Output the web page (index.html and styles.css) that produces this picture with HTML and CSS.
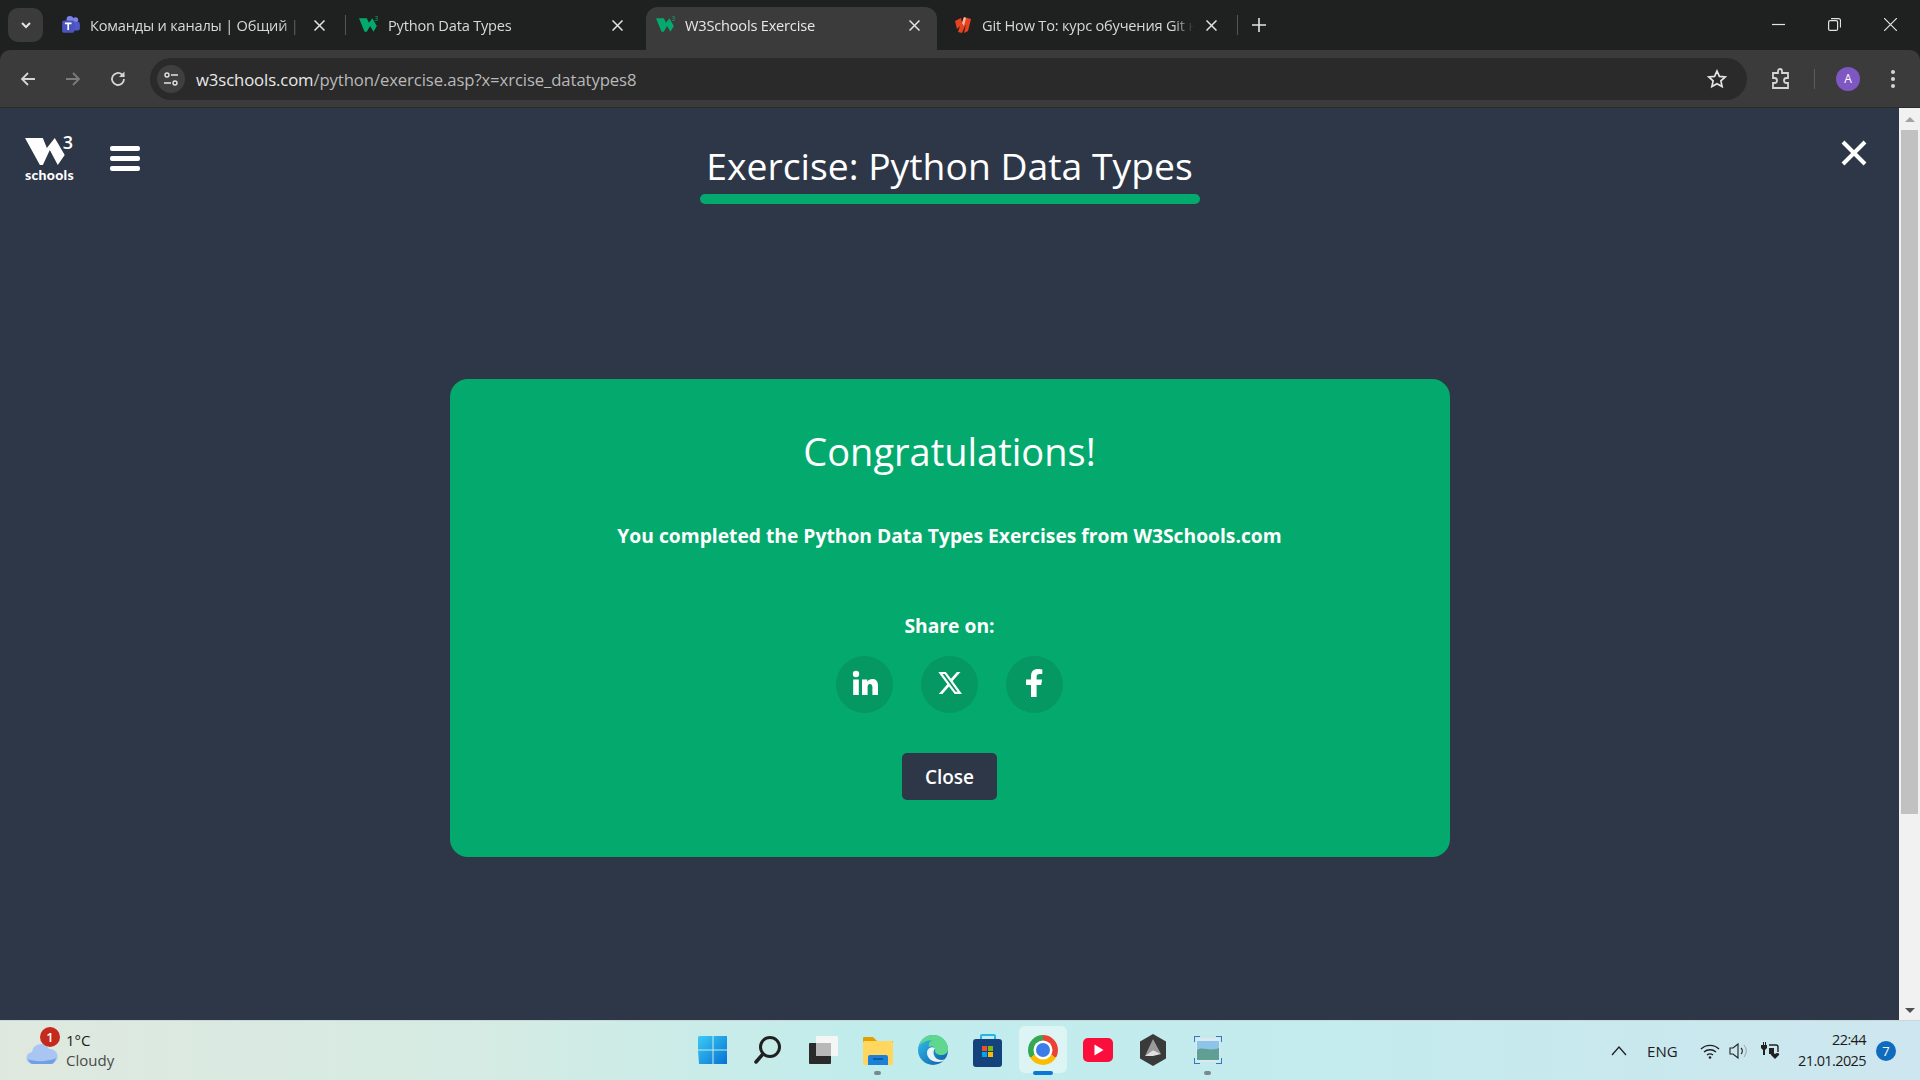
FILE: index.html
```html
<!DOCTYPE html>
<html lang="en">
<head>
    <meta charset="UTF-8">
    <meta name="viewport" content="width=device-width, initial-scale=1.0">
    <title>W3Schools Exercise</title>
    <link rel="stylesheet" href="styles.css">
</head>
<body>
    <!-- browser tabs -->
    <div class="tabstrip">
        <div class="tab-menu">
            <svg width="12" height="12" viewBox="0 0 12 12"><path d="M2 4l4 4 4-4" fill="none" stroke="#e3e3e3" stroke-width="2"/></svg>
        </div>
        <div class="tab">
            <svg class="favicon" viewBox="0 0 18 18"><circle cx="13" cy="4.5" r="2.5" fill="#7b83eb"/><rect x="9" y="6" width="8" height="8" rx="2" fill="#5059c9"/><circle cx="8" cy="4" r="3" fill="#7b83eb"/><rect x="1" y="5" width="11" height="11" rx="1.5" fill="#4b53bc"/><path d="M3.5 7.5h6M6.5 7.5v6" stroke="#fff" stroke-width="1.5"/></svg>
            <span class="tab-title">Команды и каналы | Общий | Microsoft Teams</span>
            <svg class="tab-close" viewBox="0 0 11 11"><path d="M0.5 0.5l10 10M10.5 0.5l-10 10" stroke="#e3e3e3" stroke-width="1.5"/></svg>
        </div>
        <div class="tab-sep"></div>
        <div class="tab">
            <svg class="favicon" viewBox="0 0 18 18"><path d="M0 3h7l2 4 3-4 4 7-3 5-3-5-3 5h-2z" fill="#04aa6d"/><text x="14" y="5" font-size="6" fill="#04aa6d">3</text></svg>
            <span class="tab-title">Python Data Types</span>
            <svg class="tab-close" viewBox="0 0 11 11"><path d="M0.5 0.5l10 10M10.5 0.5l-10 10" stroke="#e3e3e3" stroke-width="1.5"/></svg>
        </div>
        <div class="tab active">
            <svg class="favicon" viewBox="0 0 18 18"><path d="M0 3h7l2 4 3-4 4 7-3 5-3-5-3 5h-2z" fill="#04aa6d"/><text x="14" y="5" font-size="6" fill="#04aa6d">3</text></svg>
            <span class="tab-title">W3Schools Exercise</span>
            <svg class="tab-close" viewBox="0 0 11 11"><path d="M0.5 0.5l10 10M10.5 0.5l-10 10" stroke="#e3e3e3" stroke-width="1.5"/></svg>
        </div>
        <div class="tab">
            <svg class="favicon" viewBox="0 0 20 20"><path d="M2 6l6-3 1 5 2-6 7 2-3 12-4 2 2-9-4 9-4-1 2-6-3 3z" fill="#e8431f"/><path d="M9 8l2-6 2 1-2 8z" fill="#f9b9a4"/></svg>
            <span class="tab-title">Git How To: курс обучения Git на русском</span>
            <svg class="tab-close" viewBox="0 0 11 11"><path d="M0.5 0.5l10 10M10.5 0.5l-10 10" stroke="#e3e3e3" stroke-width="1.5"/></svg>
        </div>
        <div class="tab-sep"></div>
        <div class="tab-new">
            <svg width="14" height="14" viewBox="0 0 14 14"><path d="M7 0v14M0 7h14" stroke="#e3e3e3" stroke-width="1.6"/></svg>
        </div>
        <div class="window-btns">
            <svg width="13" height="13" viewBox="0 0 13 13"><path d="M0 6.5h13" stroke="#e3e3e3" stroke-width="1.2"/></svg>
            <svg width="13" height="13" viewBox="0 0 13 13"><rect x="0.6" y="2.6" width="9" height="9.8" rx="1.5" fill="none" stroke="#e3e3e3" stroke-width="1.2"/><path d="M3 .6h7.5a2 2 0 0 1 2 2v7" fill="none" stroke="#e3e3e3" stroke-width="1.2"/></svg>
            <svg width="13" height="13" viewBox="0 0 13 13"><path d="M0 0l13 13M13 0L0 13" stroke="#e3e3e3" stroke-width="1.2"/></svg>
        </div>
    </div>

    <!-- address bar -->
    <div class="toolbar">
        <div class="nav-btn">
            <svg width="18" height="18" viewBox="0 0 18 18"><path d="M16 9H3M9 3L3 9l6 6" fill="none" stroke="#d5d5d5" stroke-width="1.8"/></svg>
        </div>
        <div class="nav-btn">
            <svg width="18" height="18" viewBox="0 0 18 18"><path d="M2 9h13M9 3l6 6-6 6" fill="none" stroke="#7b7b7b" stroke-width="1.8"/></svg>
        </div>
        <div class="nav-btn">
            <svg width="18" height="18" viewBox="0 0 18 18"><path d="M15 9a6 6 0 1 1-2-4.5L15 6.500" fill="none" stroke="#d5d5d5" stroke-width="1.8"/><path d="M15.500 1.500v5.500h-5.500z" fill="#d5d5d5"/></svg>
        </div>
        <div class="omnibox">
            <div class="site-chip">
                <svg width="16" height="16" viewBox="0 0 16 16"><circle cx="4" cy="4" r="2" fill="none" stroke="#e3e3e3" stroke-width="1.4"/><path d="M8 4h7M1 12h7" stroke="#e3e3e3" stroke-width="1.4"/><circle cx="12" cy="12" r="2" fill="none" stroke="#e3e3e3" stroke-width="1.4"/></svg>
            </div>
            <div class="url"><span class="url-host">w3schools.com</span>/python/exercise.asp?x=xrcise_datatypes8</div>
            <svg class="star" width="20" height="20" viewBox="0 0 20 20"><path d="M10 2l2.400 5.400 5.800.6-4.300 3.900 1.200 5.700-5.100-2.900-5.100 2.900 1.200-5.700L1.800 8l5.800-.6z" fill="none" stroke="#e3e3e3" stroke-width="1.700"/></svg>
        </div>
        <div class="toolbar-right">
            <svg width="20" height="22" viewBox="0 0 20 22"><path d="M2 5h5V3a2 2 0 0 1 4 0v2h6v5h-1.500a2.500 2.500 0 0 0 0 5H17v5H2v-5h1.500a2.500 2.500 0 0 0 0-5H2z" fill="none" stroke="#d5d5d5" stroke-width="1.800"/></svg>
            <div class="toolbar-sep"></div>
            <div class="avatar">A</div>
            <div class="menu-dots"><i></i><i></i><i></i></div>
        </div>
    </div>

    <!-- page -->
    <div class="viewport">
        <div class="page">
            <div class="page-head">
                <div class="head-left">
                    <div class="logo">
                        <div class="logo-top">
                            <svg width="40" height="27" viewBox="0 0 40 27"><path d="M0 0h18l4 10 8-10 10 17-7 10-8-15-7 15h-3z" fill="#fff"/></svg>
                            <span class="logo-three">3</span>
                        </div>
                        <span class="logo-word">schools</span>
                    </div>
                    <div class="burger"><i></i><i></i><i></i></div>
                </div>
                <div class="head-title">
                    <h1>Exercise: Python Data Types</h1>
                    <div class="title-bar"></div>
                </div>
                <div class="head-right">
                    <svg width="26" height="26" viewBox="0 0 26 26"><path d="M2 2l22 22M24 2L2 24" stroke="#fff" stroke-width="4"/></svg>
                </div>
            </div>

            <div class="result-card">
                <h2>Congratulations!</h2>
                <p class="result-text">You completed the Python Data Types Exercises from W3Schools.com</p>
                <p class="share-label">Share on:</p>
                <div class="share-row">
                    <div class="share-btn">
                        <svg width="26" height="26" viewBox="0 0 26 26"><circle cx="4" cy="4" r="3.200" fill="#fff"/><path d="M1.200 9.500h5.600V25H1.200zM10 9.500h5.300v2.200c1-1.600 2.800-2.600 5-2.600 4.200 0 5.700 2.700 5.700 7V25h-5.600v-7.800c0-2-.6-3.300-2.400-3.300-1.900 0-2.400 1.500-2.400 3.300V25H10z" fill="#fff"/></svg>
                    </div>
                    <div class="share-btn">
                        <svg width="24" height="24" viewBox="0 0 24 24"><path d="M18.900 1h3.600l-7.900 9.100L24 23h-7.300l-5.700-7.500L4.400 23H.8l8.500-9.700L.3 1h7.500l5.200 6.800zM17.600 20.800h2L6.700 3.100H4.500z" fill="#fff"/></svg>
                    </div>
                    <div class="share-btn">
                        <svg width="18" height="28" viewBox="0 0 18 28"><path d="M5 28V16H0v-5.500h5V7c0-4.500 2.700-7 6.800-7 1.900 0 3.700.3 4.500.4v4.700h-2.800c-2.200 0-2.900 1.400-2.900 2.800v2.600h5.500L15.200 16h-4.600v12z" fill="#fff"/></svg>
                    </div>
                </div>
                <button class="close-btn">Close</button>
            </div>
        </div>
        <div class="scrollbar">
            <div class="scroll-up"></div>
            <div class="scroll-thumb"></div>
            <div class="scroll-down"></div>
        </div>
    </div>

    <!-- windows taskbar -->
    <div class="taskbar">
        <div class="weather">
            <div class="weather-icon">
                <svg width="32" height="22" viewBox="0 0 32 22"><path d="M7 21a6 6 0 0 1-1-12 9 9 0 0 1 17-3 7 7 0 0 1 2 15z" fill="#a9c6f2"/><path d="M2 16c6 3 20 3 28-1-1 4-3 6-5 6H7c-2 0-4-2-5-5z" fill="#6f9fe6"/></svg>
                <span class="weather-badge">1</span>
            </div>
            <div class="weather-text">
                <div>1°C</div>
                <div class="weather-sub">Cloudy</div>
            </div>
        </div>

        <div class="task-icons">
            <div class="task-icon">
                <svg width="30" height="30" viewBox="0 0 30 30"><defs><linearGradient id="win" x1="0" y1="0" x2="1" y2="1"><stop offset="0" stop-color="#3ccbf4"/><stop offset="1" stop-color="#0672d4"/></linearGradient></defs><path d="M1 1h13.500v13.500H0V2zM15.500 1H29v13.500H15.500zM0 15.500h14.500V29H1zM15.500 15.500H29V29H15.500z" fill="url(#win)"/></svg>
            </div>
            <div class="task-icon">
                <svg width="30" height="30" viewBox="0 0 30 30"><circle cx="17" cy="12" r="9.500" fill="none" stroke="#202020" stroke-width="3"/><path d="M10 19l-7 8" stroke="#202020" stroke-width="3.500" stroke-linecap="round"/></svg>
            </div>
            <div class="task-icon">
                <svg width="30" height="30" viewBox="0 0 30 30"><rect x="1" y="8" width="22" height="21" rx="1" fill="#2a2a2a"/><rect x="8" y="1" width="22" height="20" rx="1" fill="#f4f6f6"/><rect x="8" y="8" width="15" height="13" fill="#b8b8b8"/></svg>
            </div>
            <div class="task-icon">
                <svg width="30" height="30" viewBox="0 0 30 30"><path d="M0 3a1 1 0 0 1 1-1h9l4 4h16v6H0z" fill="#e0a100"/><rect y="6" width="30" height="24" rx="1.500" fill="#ffd75e"/><path d="M5 22a2 2 0 0 1 2-2h16a2 2 0 0 1 2 2v8H5z" fill="#1b81d8"/><path d="M10 24h10" stroke="#0b4f94" stroke-width="1.500"/></svg>
                <span class="task-dot"></span>
            </div>
            <div class="task-icon">
                <svg width="30" height="30" viewBox="0 0 30 30"><defs><linearGradient id="edge" x1="0" y1="0" x2="1" y2="1"><stop offset="0" stop-color="#35c1f1"/><stop offset="1" stop-color="#0c59a4"/></linearGradient></defs><circle cx="15" cy="15" r="15" fill="url(#edge)"/><path d="M15 0c8 0 15 6 15 14 0 4-3 6-7 6-3 0-6-2-6-4 1-4-3-6-6-4C10 8 13 5 15 5 9 5 3 8 1 11 3 4 9 0 15 0z" fill="#5fd78c"/><path d="M17 13c-3-2-8 0-8 5 0 5 5 9 11 9 3 0 6-1 7-3-3 2-8 1-10-2-2-3-2-6 0-9z" fill="#fff" opacity="0.9"/></svg>
            </div>
            <div class="task-icon">
                <svg width="30" height="34" viewBox="0 0 30 34"><path d="M8 7V3a1 1 0 0 1 1-1h12a1 1 0 0 1 1 1v4" fill="none" stroke="#27b4e8" stroke-width="2"/><rect y="6" width="29" height="28" rx="3" fill="#14427c"/><rect x="9" y="13" width="5" height="5" fill="#f25022"/><rect x="15" y="13" width="5" height="5" fill="#7fba00"/><rect x="9" y="19" width="5" height="5" fill="#00a4ef"/><rect x="15" y="19" width="5" height="5" fill="#ffb900"/></svg>
            </div>
            <div class="task-icon current">
                <div class="chrome-logo"><div class="chrome-eye"></div></div>
                <span class="task-dot wide"></span>
            </div>
            <div class="task-icon">
                <svg width="30" height="24" viewBox="0 0 30 24"><rect width="30" height="24" rx="5" fill="#fa0f3c"/><path d="M11.500 6.500l9 5.500-9 5.500z" fill="#fff"/></svg>
            </div>
            <div class="task-icon">
                <svg width="28" height="32" viewBox="0 0 28 32"><path d="M14 0l13 7.500v17L14 32 1 24.500v-17z" fill="#3a3a3a"/><path d="M14 5l8 15-8-4-8 6z" fill="#9a9a9a"/><path d="M6 22l8-6 8 4-8 2z" fill="#e0e0e0"/></svg>
            </div>
            <div class="task-icon">
                <svg width="28" height="28" viewBox="0 0 28 28"><rect x="2" y="2" width="24" height="24" fill="#dfe8ee"/><rect x="3" y="5" width="22" height="9" fill="#8cc4ea"/><path d="M3 14c6-4 12 2 22-2v12H3z" fill="#5f9f94"/><path d="M0 6V0h6M22 0h6v6M28 22v6h-6M6 28H0v-6" fill="none" stroke="#2e7cc0" stroke-width="2"/></svg>
                <span class="task-dot"></span>
            </div>
        </div>

        <div class="tray">
            <svg class="tray-up" width="16" height="10" viewBox="0 0 16 10"><path d="M1 9l7-8 7 8" fill="none" stroke="#202020" stroke-width="1.300"/></svg>
            <span class="tray-lang">ENG</span>
            <svg class="tray-wifi" width="20" height="16" viewBox="0 0 20 16"><path d="M1 6a13 13 0 0 1 18 0M4 9a9 9 0 0 1 12 0M7 12a5 5 0 0 1 6 0" fill="none" stroke="#202020" stroke-width="1.400"/><circle cx="10" cy="14.500" r="1.300" fill="#202020"/></svg>
            <svg class="tray-sound" width="20" height="16" viewBox="0 0 20 16"><path d="M1 5h3l5-4v14l-5-4H1z" fill="none" stroke="#202020" stroke-width="1.100"/><path d="M12 5a4 4 0 0 1 0 6" fill="none" stroke="#202020" stroke-width="1.100"/><path d="M15 2a9 9 0 0 1 0 12" fill="none" stroke="#a0a8ac" stroke-width="1.100"/></svg>
            <svg class="tray-power" width="20" height="18" viewBox="0 0 20 18"><path d="M1 3h2V0h1v3h1V0h1v3h1v3L5 8v5H3V8L1 6z" fill="#202020"/><path d="M9 3h7a2 2 0 0 1 2 2v5" fill="none" stroke="#202020" stroke-width="1.400"/><rect x="9" y="6" width="5" height="6" fill="#202020"/><path d="M15 17l-4-4c-1-2 2-3 4-1 2-2 5-1 4 1z" fill="#202020"/></svg>
            <div class="clock">
                <div>22:44</div>
                <div>21.01.2025</div>
            </div>
            <span class="notif">7</span>
        </div>
    </div>
</body>
</html>
```

FILE: styles.css
```css
* {
    box-sizing: border-box;
}

html, body {
    margin: 0;
    padding: 0;
    height: 100%;
}

body {
    width: 1920px;
    height: 1080px;
    display: flex;
    flex-direction: column;
    overflow: hidden;
    background: #1f2120;
    font-family: "Open Sans", "Noto Sans", sans-serif;
}

/* browser tabs */
.tabstrip {
    height: 50px;
    background: #1f2120;
    display: flex;
    align-items: flex-end;
    color: #d8d8d8;
    font-size: 14.600px;
    flex: none;
}

.tab-menu {
    width: 35px;
    height: 34px;
    margin: 0 5px 8px 8px;
    background: #3b3b3b;
    border-radius: 10px;
    display: flex;
    align-items: center;
    justify-content: center;
}

.tab {
    width: 297px;
    height: 43px;
    padding: 0 20px 7px 13px;
    border-radius: 12px 12px 0 0;
    display: flex;
    align-items: center;
    flex: none;
}

.tab.active {
    width: 291px;
    margin: 0 3px;
    padding: 0 17px 7px 10px;
    background: #3b3b3b;
    color: #e8e8e8;
}

.favicon {
    width: 20px;
    height: 20px;
    margin-right: 9px;
    flex: none;
}

.tab-title {
    flex: 1;
    white-space: nowrap;
    overflow: hidden;
    font-stretch: 90%;
    letter-spacing: -0.2px;
    -webkit-mask-image: linear-gradient(to right, #000 90%, transparent 100%);
    mask-image: linear-gradient(to right, #000 90%, transparent 100%);
}

.tab-close {
    width: 11px;
    height: 11px;
    margin-left: 12px;
    flex: none;
}

.tab-sep {
    width: 1px;
    height: 20px;
    background: #555;
    margin-bottom: 15px;
    flex: none;
}

.tab-new {
    margin: 0 0 18px 14px;
    width: 14px;
    height: 14px;
    display: flex;
}

.window-btns {
    margin-left: auto;
    height: 50px;
    padding: 0 23px 2px 0;
    display: flex;
    align-items: center;
    gap: 43px;
}

/* address bar */
.toolbar {
    height: 58px;
    background: #3b3b3b;
    display: flex;
    align-items: center;
    padding-left: 5px;
    border-bottom: 1px solid #2a2a2a;
    border-radius: 10px 10px 0 0;
    flex: none;
}

.nav-btn {
    width: 45px;
    height: 40px;
    display: flex;
    align-items: center;
    justify-content: center;
}

.omnibox {
    margin-left: 10px;
    width: 1597px;
    height: 42px;
    background: #2a2a2a;
    border-radius: 21px;
    display: flex;
    align-items: center;
    padding: 0 20px 0 7px;
}

.site-chip {
    width: 28px;
    height: 28px;
    border-radius: 50%;
    background: #3f3f3f;
    display: flex;
    align-items: center;
    justify-content: center;
    margin-right: 11px;
}

.url {
    flex: 1;
    color: #b9b9b9;
    font-size: 16.700px;
    font-stretch: 90%;
    letter-spacing: -0.1px;
    padding-top: 1px;
}

.url-host {
    color: #e8e8e8;
}

.toolbar-right {
    flex: 1;
    display: flex;
    align-items: center;
    padding-left: 24px;
}

.toolbar-sep {
    width: 1px;
    height: 20px;
    background: #5c5c5c;
    margin: 0 21px 0 23px;
}

.avatar {
    width: 24px;
    height: 24px;
    border-radius: 50%;
    background: #7e57c2;
    color: #fff;
    font-size: 12px;
    display: flex;
    align-items: center;
    justify-content: center;
}

.menu-dots {
    margin-left: 31px;
    display: flex;
    flex-direction: column;
    gap: 3px;
}

.menu-dots i {
    display: block;
    width: 4px;
    height: 4px;
    border-radius: 50%;
    background: #d5d5d5;
}

/* page */
.viewport {
    flex: 1;
    display: flex;
    min-height: 0;
}

.page {
    flex: 1;
    background: #2d3748;
    color: #fff;
    display: flex;
    flex-direction: column;
    align-items: center;
}

.page-head {
    width: 100%;
    display: grid;
    grid-template-columns: 1fr 500px 1fr;
    padding-top: 26px;
}

.head-left {
    display: flex;
    align-items: flex-start;
    padding-left: 25px;
}

.logo {
    width: 48px;
    display: flex;
    flex-direction: column;
    margin-top: 4px;
}

.logo-top {
    display: flex;
    align-items: flex-start;
}

.logo-three {
    font-size: 18px;
    font-weight: 600;
    line-height: 18px;
    margin: -5px 0 0 -2px;
}

.logo-word {
    font-family: "Lato", sans-serif;
    font-size: 14px;
    font-weight: 900;
    line-height: 15px;
    margin-top: 2px;
    letter-spacing: 0.3px;
}

.burger {
    margin: 12px 0 0 37px;
    width: 30px;
    display: flex;
    flex-direction: column;
    gap: 5px;
}

.burger i {
    display: block;
    height: 5px;
    background: #fff;
    border-radius: 2px;
}

.head-title {
    text-align: center;
}

.head-title h1 {
    margin: 0;
    font-size: 37.300px;
    font-weight: 400;
    line-height: 52px;
    height: 60px;
    padding-top: 6px;
    white-space: nowrap;
}

.title-bar {
    height: 10px;
    background: #04aa6d;
    border-radius: 5px;
}

.head-right {
    display: flex;
    justify-content: flex-end;
    padding: 6px 32px 0 0;
}

.result-card {
    margin-top: 175px;
    width: 1000px;
    height: 478px;
    background: #04aa6d;
    border-radius: 18px;
    display: flex;
    flex-direction: column;
    align-items: center;
    padding-top: 44px;
}

.result-card h2 {
    margin: 0;
    font-size: 38px;
    font-weight: 400;
    line-height: 56px;
}

.result-text {
    margin: 42px 0 0;
    font-size: 19.250px;
    font-weight: 700;
    line-height: 30px;
}

.share-label {
    margin: 60px 0 0;
    font-size: 19.250px;
    font-weight: 700;
    line-height: 30px;
}

.share-row {
    display: flex;
    gap: 28px;
    margin-top: 15px;
}

.share-btn {
    width: 57px;
    height: 57px;
    padding-bottom: 3px;
    border-radius: 50%;
    background: #059862;
    display: flex;
    align-items: center;
    justify-content: center;
}

.close-btn {
    margin-top: 40px;
    width: 95px;
    height: 47px;
    padding: 0;
    border: none;
    border-radius: 5px;
    background: #2d3748;
    color: #fff;
    font-family: inherit;
    font-size: 19px;
    font-weight: 600;
}

.scrollbar {
    width: 21px;
    background: #f1f1f1;
    display: flex;
    flex-direction: column;
    align-items: center;
    padding: 9px 0 7px;
    flex: none;
}

.scroll-up, .scroll-down {
    width: 0;
    height: 0;
    border-left: 5px solid transparent;
    border-right: 5px solid transparent;
}

.scroll-up {
    border-bottom: 5px solid #a3a3a3;
    margin-bottom: 8px;
}

.scroll-thumb {
    width: 17px;
    height: 684px;
    background: #c1c1c1;
}

.scroll-down {
    border-top: 5px solid #505050;
    margin-top: auto;
}

/* windows taskbar */
.taskbar {
    height: 60px;
    flex: none;
    background: linear-gradient(to right, #dfe8df 0%, #d5ebe3 25%, #c1ecec 45%, #c4ebee 70%, #cee6ef 100%);
    border-top: 1px solid #c8d8d8;
    display: grid;
    grid-template-columns: 1fr auto 1fr;
    align-items: center;
    font-size: 15px;
    color: #1c1c1c;
}

.weather {
    display: flex;
    align-items: center;
    padding-left: 26px;
}

.weather-icon {
    position: relative;
    width: 32px;
    height: 22px;
    margin-top: 6px;
}

.weather-badge {
    position: absolute;
    top: -16px;
    left: 14px;
    width: 20px;
    height: 20px;
    border-radius: 50%;
    background: #c42b1c;
    color: #fff;
    font-size: 13px;
    font-weight: 600;
    line-height: 20px;
    text-align: center;
}

.weather-text {
    margin: -2px 0 0 8px;
    line-height: 20px;
    font-stretch: 90%;
}

.weather-sub {
    color: #4a4a4a;
}

.task-icons {
    display: flex;
    margin-top: -2px;
}

.task-icon {
    position: relative;
    width: 55px;
    height: 47px;
    display: flex;
    align-items: center;
    justify-content: center;
    border-radius: 6px;
}

.task-icon.current {
    width: 48px;
    margin: 0 3.500px;
    background: rgba(255, 255, 255, 0.45);
}

.task-dot {
    position: absolute;
    bottom: -2px;
    left: 24px;
    width: 7px;
    height: 4px;
    border-radius: 2px;
    background: #7a8a8c;
}

.task-dot.wide {
    left: 14px;
    width: 20px;
    background: #0a78d4;
}

.chrome-logo {
    width: 30px;
    height: 30px;
    border-radius: 50%;
    background: conic-gradient(from 30deg, #ea4335 0 60deg, #ea4335 60deg 90deg, #fbbc04 90deg 210deg, #34a853 210deg 330deg, #ea4335 330deg);
    display: flex;
    align-items: center;
    justify-content: center;
}

.chrome-eye {
    width: 14px;
    height: 14px;
    border-radius: 50%;
    background: #3b7de8;
    box-shadow: 0 0 0 2.500px #fff;
}

.tray {
    display: flex;
    align-items: center;
    justify-content: flex-end;
    padding-right: 24px;
}

.tray-lang {
    width: 30px;
    margin-left: 20px;
    font-stretch: 90%;
}

.tray-wifi {
    margin-left: 23px;
}

.tray-sound {
    margin-left: 9px;
}

.tray-power {
    margin-left: 11px;
}

.clock {
    margin: -2px 0 0 18px;
    text-align: right;
    line-height: 21px;
    font-size: 14.500px;
    font-stretch: 90%;
    letter-spacing: -0.6px;
}

.notif {
    width: 20px;
    height: 20px;
    border-radius: 50%;
    background: #0f6cbd;
    color: #fff;
    font-size: 13px;
    line-height: 20px;
    text-align: center;
    margin-left: 10px;
}
```
